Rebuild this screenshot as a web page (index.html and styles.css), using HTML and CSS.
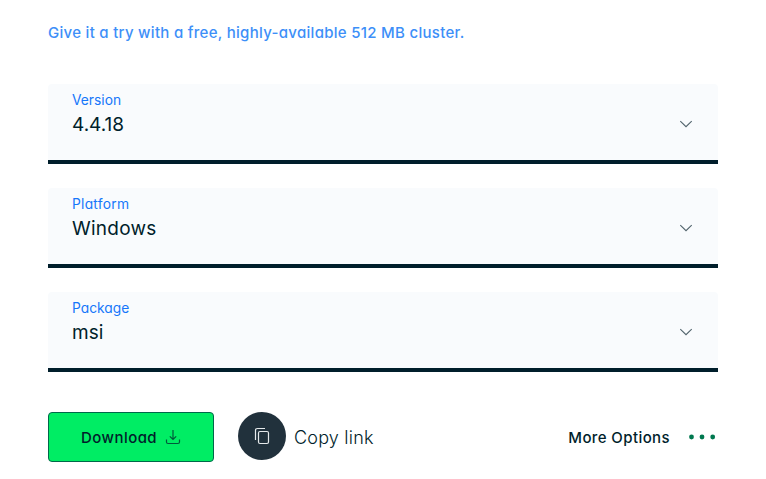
FILE: index.html
```html
<!DOCTYPE html>
<html lang="en">
<head>
<meta charset="utf-8">
<title>Download</title>
<link rel="stylesheet" href="styles.css">
</head>
<body>
<main class="panel">
  <a class="promo">Give it a try with a free, highly-available 512 MB cluster.</a>
  <div class="fields">
    <div class="field">
      <div><div class="label">Version</div><div class="value">4.4.18</div></div>
      <svg class="chevron" width="14" height="8" viewBox="0 0 14 8"><path d="M1.300 1.200L7 6.700l5.700-5.500"/></svg>
    </div>
    <div class="field">
      <div><div class="label wide">Platform</div><div class="value wide">Windows</div></div>
      <svg class="chevron" width="14" height="8" viewBox="0 0 14 8"><path d="M1.300 1.200L7 6.700l5.700-5.500"/></svg>
    </div>
    <div class="field">
      <div><div class="label">Package</div><div class="value">msi</div></div>
      <svg class="chevron" width="14" height="8" viewBox="0 0 14 8"><path d="M1.300 1.200L7 6.700l5.700-5.500"/></svg>
    </div>
  </div>
  <div class="actions">
    <button class="download"><span>Download</span>
      <svg width="16" height="16" viewBox="0 0 16 16"><path d="M8 1v9.500M4.800 7.300L8 10.500l3.200-3.200M1.500 10.500v2.500q0 1.500 1.500 1.500h10q1.500 0 1.500-1.500v-2.500"/></svg>
    </button>
    <button class="copy">
      <i class="disc"><svg width="16" height="18" viewBox="0 0 16 18"><path d="M1.500 13V3.500q0-2 2-2h7.500"/><rect x="4.500" y="4.500" width="10" height="12" rx="1.500"/></svg></i>
      <span>Copy link</span>
    </button>
    <button class="more"><span>More Options</span>
      <svg width="28" height="6" viewBox="0 0 28 6"><circle cx="3.500" cy="3" r="2.400"/><circle cx="14" cy="3" r="2.400"/><circle cx="24.700" cy="3" r="2.400"/></svg>
    </button>
  </div>
</main>
</body>
</html>
```
FILE: styles.css
```css
body {
  margin: 0;
  background: #fff;
  color: #001e2b;
  font-family: Inter, "Open Sans", sans-serif;
  font-feature-settings: "cv11";
}
.panel { padding: 21px 48px 0; }
.promo {
  display: block;
  height: 24px;
  line-height: 24px;
  font-size: 15px;
  letter-spacing: 0.29px;
  font-weight: 500;
  color: #3d8ff8;
  white-space: nowrap;
}
.fields { display: grid; gap: 24px; margin-top: 39px; }
.field {
  box-sizing: border-box;
  height: 80px;
  padding: 6px 25px 0 24px;
  display: flex;
  justify-content: space-between;
  background: #f9fbfd;
  border-bottom: 4px solid #001e2b;
  border-radius: 4px 4px 0 0;
}
.label { height: 20px; line-height: 20px; font-size: 13.8px; color: #1677fa; }
.label.wide { letter-spacing: 0.25px; }
.value { height: 28px; line-height: 30px; font-size: 19px; font-weight: 400; }
.value.wide { letter-spacing: 0.25px; }
.chevron { margin-top: 30px; fill: none; stroke: #51636c; stroke-width: 1.1; }
.actions { display: flex; align-items: center; height: 50px; margin-top: 40px; }
button {
  display: flex;
  align-items: center;
  padding: 0;
  border: 0;
  background: none;
  color: inherit;
  font: inherit;
  font-feature-settings: inherit;
  white-space: nowrap;
}
.download {
  box-sizing: border-box;
  width: 166px;
  height: 50px;
  padding: 0 32px;
  justify-content: space-between;
  background: #00ed64;
  border: 1px solid #00684a;
  border-radius: 4px;
  font-size: 15px;
  letter-spacing: 0.45px;
  font-weight: 500;
}
.download svg { fill: none; stroke: #00593a; stroke-width: 1.2; }
.copy { margin-left: 24px; gap: 8px; font-size: 18px; font-weight: 300; letter-spacing: 0.2px; }
.disc {
  width: 48px;
  height: 48px;
  margin-top: -2px;
  display: grid;
  place-items: center;
  border-radius: 50%;
  background: #21313c;
}
.disc svg { fill: none; stroke: #e5e9eb; stroke-width: 1.2; }
.more { margin-left: auto; gap: 18px; padding-right: 2px; font-size: 15px; font-weight: 500; letter-spacing: 0.4px; }
.more svg { fill: #00784f; }
```
